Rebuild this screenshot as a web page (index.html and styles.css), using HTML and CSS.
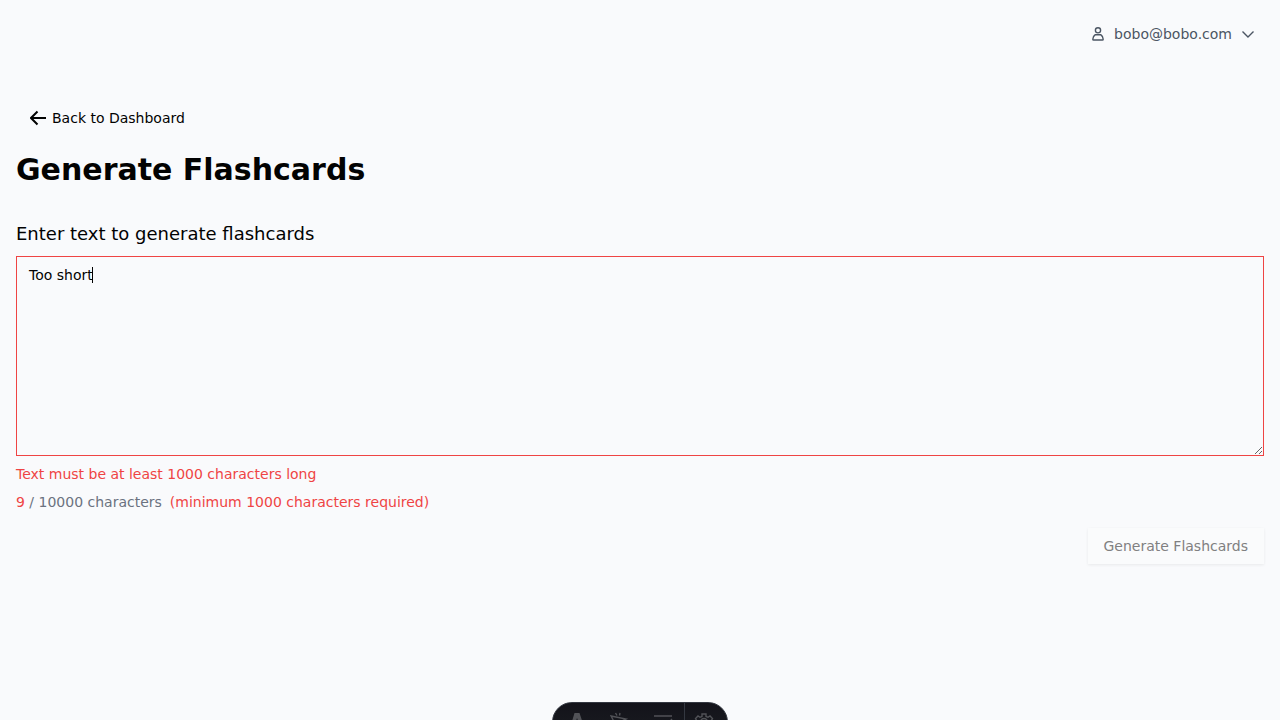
FILE: index.html
```html
<!DOCTYPE html>
<html lang="en">
<head>
<meta charset="utf-8">
<meta name="viewport" content="width=device-width, initial-scale=1">
<title>Generate Flashcards</title>
<link rel="stylesheet" href="styles.css">
</head>
<body>
<header class="topbar">
  <button type="button" class="user-menu">
    <svg class="icon" viewBox="0 0 16 16" aria-hidden="true"><circle cx="8" cy="4.300" r="2.600"/><path d="M5.300 8.700h5.400c1.500 1 2.400 2.600 2.500 4.500 0 .5-.3.800-.8.800H3.600c-.5 0-.8-.3-.8-.8.1-1.900 1-3.500 2.500-4.500z"/></svg>
    <span>bobo@bobo.com</span>
    <svg class="icon" viewBox="0 0 16 16" aria-hidden="true"><path d="m2.500 5.500 5.500 5.500 5.500-5.500"/></svg>
  </button>
</header>
<main class="page">
  <a class="back" href="#">
    <svg class="back-icon" viewBox="0 0 16 16" aria-hidden="true"><path d="M16 8H1M7.500 1.500 1 8l6.500 6.500"/></svg>
    Back to Dashboard
  </a>
  <h1 class="title">Generate Flashcards</h1>
  <form class="form">
    <label class="label" for="source">Enter text to generate flashcards</label>
    <div class="field">
      <textarea class="source" id="source" spellcheck="false" aria-invalid="true" aria-describedby="error">Too short</textarea>
      <span class="caret" aria-hidden="true"></span>
    </div>
    <p class="error" id="error">Text must be at least 1000 characters long</p>
    <p class="count"><span class="bad">9</span> / 10000 characters<span class="bad minimum">(minimum 1000 characters required)</span></p>
    <button class="submit" type="submit" disabled>Generate Flashcards</button>
  </form>
</main>
<div class="toolbar">
  <button type="button" class="tool" aria-label="Menu"><svg class="tool-icon" viewBox="0 0 20 20" aria-hidden="true"><path class="solid" d="M7.500 1h5l5 15c-1.500-.8-3-1.200-4.500-1.500L10 6l-2.500 8.500C6 14.800 4.500 15.200 3 16z"/></svg></button>
  <button type="button" class="tool" aria-label="Inspect"><svg class="tool-icon" viewBox="0 0 20 20" aria-hidden="true"><path d="m1 4 15 3-6 3-2 7zM5.500 1 7 3.500M10 1 9.500 3.500"/></svg></button>
  <button type="button" class="tool" aria-label="Audit"><svg class="tool-icon" viewBox="0 0 20 20" aria-hidden="true"><path d="M1 4h18M1 9h8M1 15h8M12 10l2 3 5-6"/></svg></button>
  <button type="button" class="tool tool-settings" aria-label="Settings"><svg class="tool-icon" viewBox="0 0 20 20" aria-hidden="true"><path d="M8 2h4v2.500l2 .8 2-1.300 2.500 2.500L17 9v2l1.500 2.500L16 16l-2-1-2 .8V18H8v-2.200L6 15l-2 1-2.500-2.500L3 11V9L1.500 6.500 4 4l2 1.300 2-.8z"/><circle cx="10" cy="10" r="3.500"/></svg></button>
</div>
</body>
</html>
```

FILE: styles.css
```css
* {
  box-sizing: border-box;
}

body {
  margin: 0;
  min-height: 100vh;
  background: #f9fafc;
  color: #020202;
  font: 14px/20px "DejaVu Sans", sans-serif;
}

button,
textarea {
  font: inherit;
}

.topbar {
  display: flex;
  justify-content: flex-end;
  padding: 16px;
}

.user-menu {
  display: flex;
  align-items: center;
  gap: 8px;
  height: 36px;
  padding: 0 8px;
  border: 0;
  background: none;
  color: #4b5563;
}

.icon,
.back-icon,
.tool-icon {
  width: 16px;
  height: 16px;
  fill: none;
  stroke: currentColor;
  stroke-width: 1.4;
}

.page {
  display: flex;
  flex-direction: column;
  align-items: flex-start;
  padding: 32px 16px;
}

.back {
  display: flex;
  align-items: center;
  gap: 6px;
  height: 36px;
  padding: 0 14px;
  color: inherit;
  text-decoration: none;
}

.back-icon {
  stroke-width: 2;
}

.title {
  margin: 16px 0 32px;
  font-size: 30px;
  line-height: 36px;
}

.form {
  display: flex;
  flex-direction: column;
  width: 100%;
}

.label {
  margin-bottom: 8px;
  font-size: 18px;
  line-height: 28px;
}

.field {
  position: relative;
  display: flex;
}

.source {
  flex: 1;
  min-height: 200px;
  padding: 8px 12px;
  border: 1px solid #ef4444;
  border-radius: 0;
  outline: 0;
  background: transparent;
  color: inherit;
  resize: vertical;
}

.caret {
  position: absolute;
  top: 11px;
  left: 76px;
  width: 1px;
  height: 16px;
  background: #020202;
}

.error,
.count {
  margin: 8px 0 0;
}

.error,
.bad {
  color: #ef4444;
}

.count {
  color: #6b7280;
}

.minimum {
  margin-left: 8px;
}

.submit {
  align-self: flex-end;
  height: 36px;
  margin-top: 16px;
  padding: 0 16px;
  border: 0;
  background: #fafbfc;
  color: #808081;
  box-shadow: 0 1px 3px rgb(0 0 0 / 7%);
}

.toolbar {
  position: fixed;
  bottom: -22px;
  left: 50%;
  display: flex;
  height: 40px;
  padding-left: 2px;
  overflow: hidden;
  transform: translateX(-50%);
  border: 1px solid #343841;
  border-radius: 20px;
  background: linear-gradient(#13131a, #1b1d22);
}

.tool {
  display: flex;
  align-items: center;
  justify-content: center;
  width: 43px;
  padding: 0;
  border: 0;
  background: none;
  color: #515257;
}

.tool-icon {
  width: 20px;
  height: 20px;
}

.tool-settings {
  padding-right: 4px;
  border-left: 1px solid #343841;
}

.solid {
  fill: currentColor;
  stroke: none;
}
```
